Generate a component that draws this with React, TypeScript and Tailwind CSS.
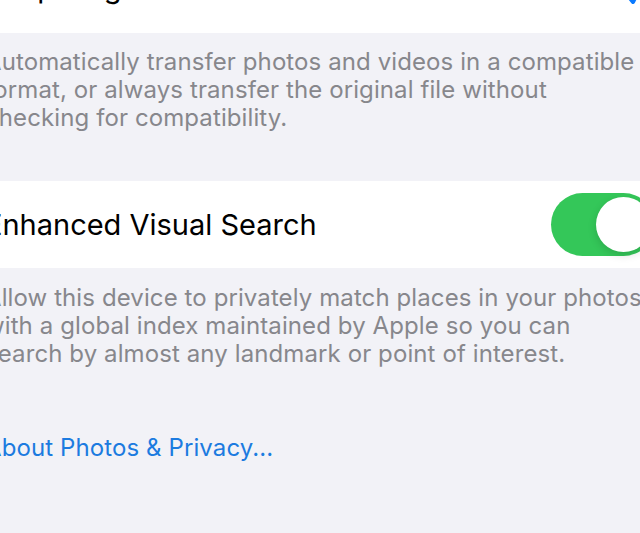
import React from "react";

export default function App() {
  return (
    <div
      className="w-[640px] h-[533px] overflow-hidden bg-[#f2f2f7]"
      style={{ fontFamily: "Inter, 'Noto Sans', sans-serif" }}
    >
      <div className="w-[680px] ml-[-15px]">
        {/* top row (clipped) */}
        <div className="relative h-[33px] overflow-hidden bg-white">
          <div className="mt-[-30px] text-[29px] leading-[36px] text-black whitespace-nowrap">
            Keep Originals
          </div>
          <svg
            className="absolute left-[638px] top-[-26px]"
            width="24"
            height="32"
            viewBox="0 0 24 32"
          >
            <path
              d="M2 18 L10 28 L22 4"
              fill="none"
              stroke="#0a7aff"
              strokeWidth="4"
              strokeLinecap="round"
              strokeLinejoin="round"
            />
          </svg>
        </div>

        {/* footer 1 */}
        <div className="pt-[15px] text-[24px] leading-[28px] tracking-[0.1px] text-[#87878c] whitespace-nowrap">
          <div>Automatically transfer photos and videos in a compatible</div>
          <div>format, or always transfer the original file without</div>
          <div>checking for compatibility.</div>
        </div>

        {/* toggle row */}
        <div className="mt-[49px] h-[87px] bg-white flex items-center justify-between pr-[10px]">
          <span className="text-[29px] leading-[36px] text-black whitespace-nowrap">
            Enhanced Visual Search
          </span>
          <div className="w-[104px] h-[63px] rounded-full bg-[#34c759] flex items-center justify-end pr-[4px]">
            <div className="w-[55px] h-[55px] rounded-full bg-white shadow-[0_3px_8px_rgba(0,0,0,0.15)]" />
          </div>
        </div>

        {/* footer 2 */}
        <div className="pt-[16px] text-[24px] leading-[28px] tracking-[0.1px] text-[#87878c] whitespace-nowrap">
          <div>Allow this device to privately match places in your photos</div>
          <div>with a global index maintained by Apple so you can</div>
          <div>search by almost any landmark or point of interest.</div>
        </div>

        {/* link */}
        <div className="mt-[66px] text-[24px] leading-[28px] tracking-[0.1px] text-[#1c7be0] whitespace-nowrap">
          About Photos &amp; Privacy...
        </div>
      </div>
    </div>
  );
}
